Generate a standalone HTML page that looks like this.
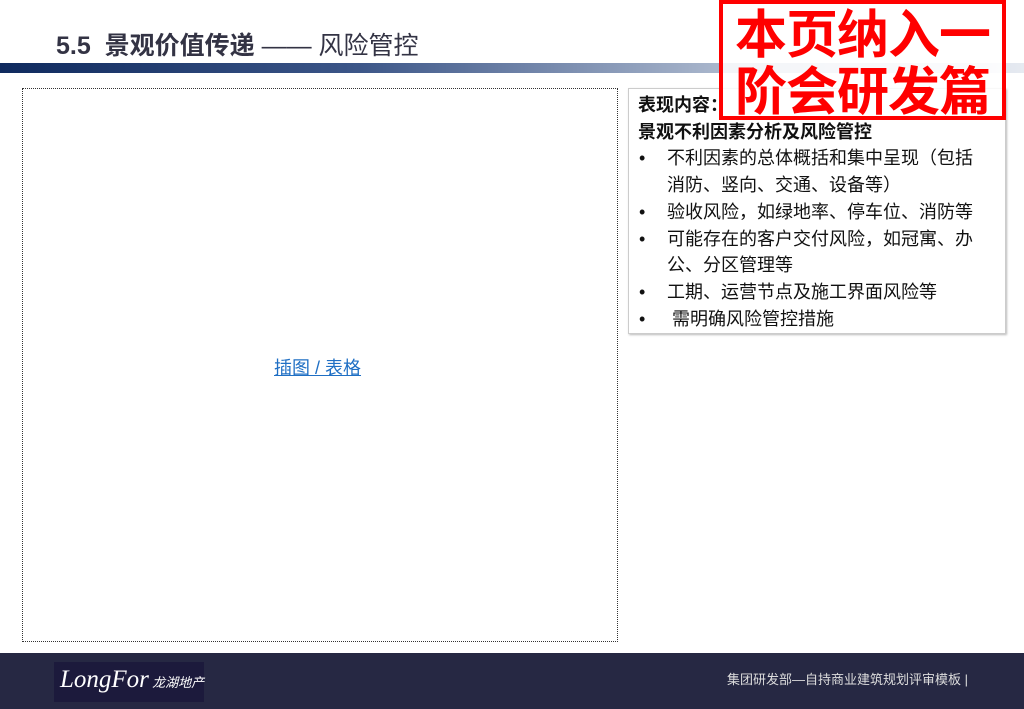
<!DOCTYPE html>
<html><head><meta charset="utf-8"><style>
body{margin:0;width:1024px;height:709px;position:relative;overflow:hidden;background:#fff;font-family:"Liberation Sans","Noto Sans CJK SC",sans-serif}
.t{position:absolute;left:56px;top:26px;font-size:25px;color:#333344;white-space:nowrap}
.t b{font-weight:bold}
.bar{position:absolute;left:0;top:63px;width:1024px;height:10px;background:linear-gradient(90deg,#0f2a5e 0%,#3c5688 35%,#a9b6cc 70%,#e6eaf1 100%)}
.box{position:absolute;left:22px;top:88px;width:594px;height:552px;border:1px dotted #333}
.lnk{position:absolute;left:274px;top:354px;font-size:18px;color:#1f6fc4;text-decoration:underline}
.pan{position:absolute;left:628px;top:88px;width:376px;height:244px;border:1px solid #ccc;box-shadow:1px 1px 2px #bbb}
.pan div{font-size:18px;line-height:26.7px;color:#111;white-space:nowrap}
.h{font-weight:bold;padding-left:9px}
.li{position:relative;padding-left:38px}
.li:before{content:"•";position:absolute;left:10px}
.red{position:absolute;left:719px;top:0;width:287px;height:120px;border:4px solid #f00;box-sizing:border-box;background:rgba(255,255,255,0.85);color:#f00;font-weight:bold;font-size:52px;line-height:57px;text-align:center;padding-top:4px;letter-spacing:-1px}
.ft{position:absolute;left:0;top:653px;width:1024px;height:56px;background:#262843}
.logo{position:absolute;left:54px;top:662px;width:150px;height:40px;background:#1c1a3c;color:#fff;font-family:"Liberation Serif",serif;font-style:italic;font-size:25px;line-height:36px;padding-left:6px;box-sizing:border-box;white-space:nowrap}
.logo span{font-size:13px}
.fr{position:absolute;left:727px;top:669px;color:#ddd;font-size:13px}
</style></head><body>
<div class="t"><b>5.5&nbsp; 景观价值传递</b> —— 风险管控</div>
<div class="bar"></div>
<div class="box"></div>
<div class="lnk">插图 / 表格</div>
<div class="pan">
<div class="h" style="margin-top:3px">表现内容：</div>
<div class="h">景观不利因素分析及风险管控</div>
<div class="li">不利因素的总体概括和集中呈现（包括<br>消防、竖向、交通、设备等）</div>
<div class="li">验收风险，如绿地率、停车位、消防等</div>
<div class="li">可能存在的客户交付风险，如冠寓、办<br>公、分区管理等</div>
<div class="li">工期、运营节点及施工界面风险等</div>
<div class="li">&nbsp;需明确风险管控措施</div>
</div>
<div class="red">本页纳入一<br>阶会研发篇</div>
<div class="ft"></div>
<div class="logo">LongFor<span> 龙湖地产</span></div>
<div class="fr">集团研发部—自持商业建筑规划评审模板 |</div>
</body></html>
